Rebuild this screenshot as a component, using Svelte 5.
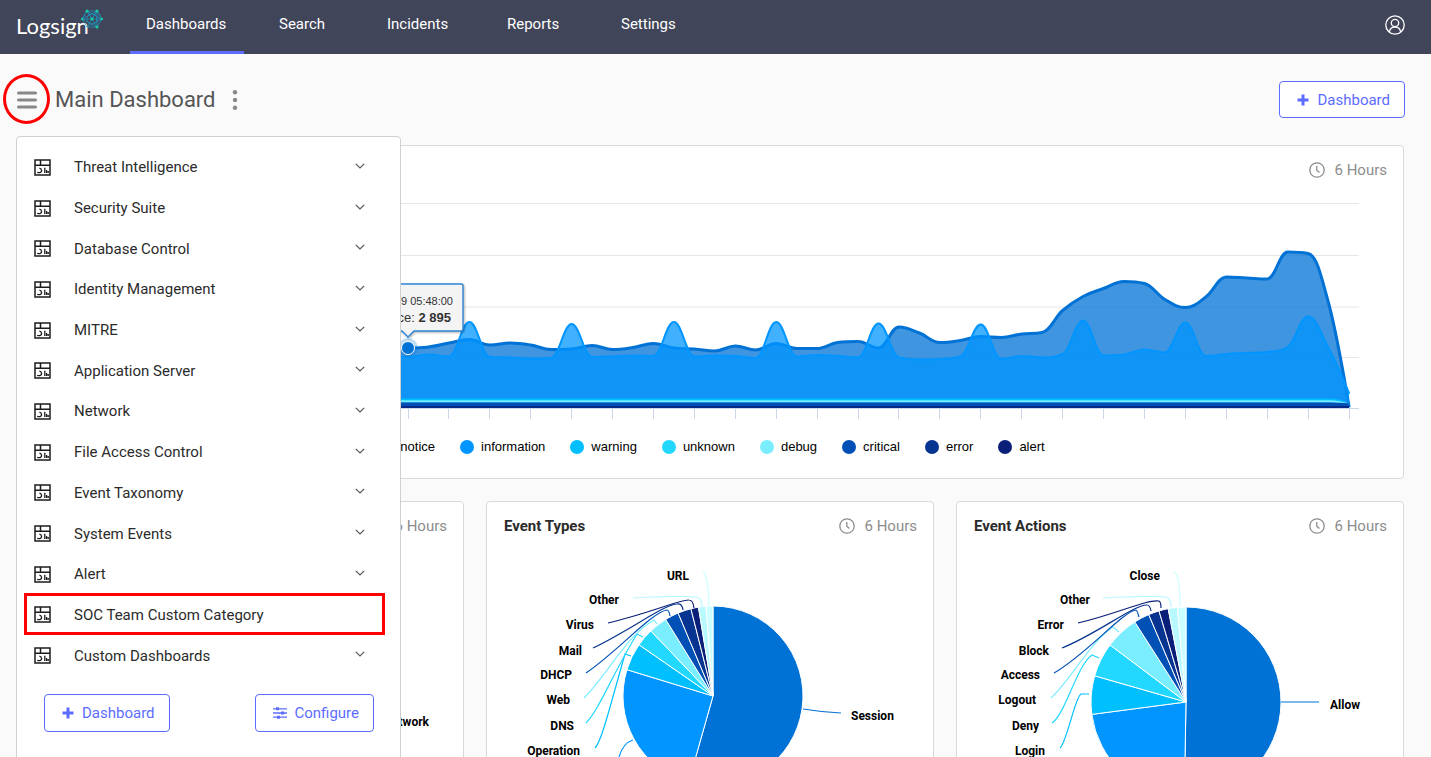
<script>
  const tabs = ['Dashboards', 'Search', 'Incidents', 'Reports', 'Settings'];

  const categories = [
    'Threat Intelligence', 'Security Suite', 'Database Control', 'Identity Management',
    'MITRE', 'Application Server', 'Network', 'File Access Control', 'Event Taxonomy',
    'System Events', 'Alert', 'SOC Team Custom Category', 'Custom Dashboards'
  ];
  const highlighted = 'SOC Team Custom Category';

  const legend = [
    ['notice', '#0072d6'], ['information', '#0095ff'], ['warning', '#00bfff'],
    ['unknown', '#22d8ff'], ['debug', '#7aedff'], ['critical', '#0050b5'],
    ['error', '#063490'], ['alert', '#0a1f78']
  ];

  // Timeline geometry
  const firstX = 391;
  const lastX = 1332;
  const base = 214;
  const noticeY = [
    154, 153, 149, 145.5, 151, 149, 151, 155.5, 155, 151.5, 155.5, 153.5, 149.5, 154, 155,
    157, 152, 156, 149.5, 154.5, 154.5, 148.5, 147.5, 154, 133, 139, 148.5, 146.5, 142.5,
    143.5, 140, 138.5, 116.5, 102.5, 94.5, 87.5, 89.5, 105.5, 113.5, 103, 83, 84, 85, 58,
    59.5, 109, 212
  ];
  const infoY = [
    163, 160.5, 162.5, 128, 163, 163.5, 164.5, 164, 130, 163, 162.5, 161.5, 162, 128, 162.5,
    161.5, 162, 164, 128, 162.5, 161, 162, 163.5, 129.5, 163.5, 165.5, 165, 162.5, 130.5,
    165, 162, 163.5, 160, 126.5, 161.5, 160.5, 155.5, 158.5, 128.5, 162, 160, 159, 158, 153,
    122.5, 154, 199
  ];

  function toPoints(ys) {
    const step = (lastX - firstX) / (ys.length - 1);
    return [[70, ys[0]], ...ys.map((y, i) => [firstX + i * step, y])];
  }

  // Smoothed line that never overshoots its neighbours
  function spline(pts) {
    let d = `M${pts[0][0]} ${pts[0][1]}`;
    let out = pts[0];
    for (let i = 1; i < pts.length; i++) {
      const [x, y] = pts[i];
      const [px, py] = pts[i - 1];
      let left = [x, y];
      let right = [x, y];
      if (i < pts.length - 1) {
        const [nx, ny] = pts[i + 1];
        const lx = (1.5 * x + px) / 2.5;
        let ly = (1.5 * y + py) / 2.5;
        const rx = (1.5 * x + nx) / 2.5;
        let ry = (1.5 * y + ny) / 2.5;
        const c = ((ry - ly) * (rx - x)) / (rx - lx) + y - ry;
        ly += c;
        ry += c;
        if (ly > py && ly > y) { ly = Math.max(py, y); ry = 2 * y - ly; }
        else if (ly < py && ly < y) { ly = Math.min(py, y); ry = 2 * y - ly; }
        if (ry > ny && ry > y) { ry = Math.max(ny, y); ly = 2 * y - ry; }
        else if (ry < ny && ry < y) { ry = Math.min(ny, y); ly = 2 * y - ry; }
        left = [lx, ly];
        right = [rx, ry];
      }
      d += ` C${out[0]} ${out[1]} ${left[0]} ${left[1]} ${x} ${y}`;
      out = right;
    }
    return d;
  }

  const areas = [
    { line: spline(toPoints(noticeY)), color: '#0072d6', width: 3 },
    { line: spline(toPoints(infoY)), color: '#0095ff', width: 2 }
  ];
  const bands = [
    { y: 205.5, color: '#00bfff', width: 2 },
    { y: 206.5, color: '#22d8ff', width: 1 },
    { y: 207.5, color: '#7aedff', width: 2 },
    { y: 210, color: '#0050b5', width: 3 },
    { y: 211.5, color: '#0050b5', width: 3 },
    { y: 213, color: '#062a85', width: 2 }
  ];
  const ticks = Array.from({ length: 24 }, (_, i) => Math.floor(firstX + (i * (lastX - firstX)) / 23) + 0.5);

  // Pies
  const palette = ['#0072d6', '#0095ff', '#00bfff', '#22d8ff', '#7aedff', '#0050b5', '#063490', '#0a1f78', '#b8f8ff', '#ccffff'];

  function slices({ cx, cy, r, stops }) {
    return stops.map((end, i) => {
      const at = (deg) => {
        const t = (deg * Math.PI) / 180;
        return `${cx + r * Math.sin(t)} ${cy - r * Math.cos(t)}`;
      };
      const start = i ? stops[i - 1] : 0;
      return `M${cx} ${cy}L${at(start)}A${r} ${r} 0 ${end - start > 180 ? 1 : 0} 1 ${at(end)}Z`;
    });
  }

  const pies = [
    {
      title: '',
      labels: [['Network', 412, 176, 'end']],
      stops: [],
      links: []
    },
    {
      title: 'Event Types',
      cx: 226, cy: 146, r: 90,
      stops: [195.8, 287, 304.7, 316.3, 328.3, 337.2, 345.8, 350.7, 355.5, 360],
      labels: [
        ['URL', 202, 30, 'end'], ['Other', 132, 54, 'end'], ['Virus', 107, 79, 'end'],
        ['Mail', 95, 105, 'end'], ['DHCP', 85, 129, 'end'], ['Web', 83, 154, 'end'],
        ['DNS', 87, 180, 'end'], ['Operation', 93, 205, 'end'], ['Session', 364, 170, 'start']
      ],
      links: [
        ['M316 159Q334 162 354 163', 0], ['M132 207Q136 193 146 190', 1],
        ['M108 198C115 190 122 160 138 104L144 106', 2], ['M99 173C112 160 125 125 150 84L156 87', 3],
        ['M97 148C120 125 140 85 167 70L170 74', 4], ['M99 123C130 102 165 62 180 60Q182 60 183 66', 5],
        ['M106 98C140 82 178 54 190 54Q195 53 196 60', 6], ['M121 73C160 64 195 49 202 50Q206 50 207 58', 7],
        ['M146 48C180 46 208 46 212 48Q215 50 215 57', 8], ['M216 22C221 24 221 43 222 56', 9]
      ]
    },
    {
      title: 'Event Actions',
      cx: 229, cy: 152, r: 95,
      stops: [181, 262.5, 286, 306.9, 327.4, 336.9, 343.5, 349.2, 354.8, 360],
      labels: [
        ['Close', 203, 30, 'end'], ['Other', 133, 54, 'end'], ['Error', 107, 79, 'end'],
        ['Block', 92, 105, 'end'], ['Access', 83, 129, 'end'], ['Logout', 79, 154, 'end'],
        ['Deny', 82, 180, 'end'], ['Login', 88, 205, 'end'], ['Allow', 373, 159, 'start']
      ],
      links: [
        ['M324 152H362', 0], ['M103 198C110 192 118 147 124 144L132 144', 2],
        ['M95 173C108 165 120 115 135 105L142 108', 3], ['M94 148C112 132 135 90 156 77L162 82', 4],
        ['M97 123C130 104 165 62 179 60Q180 60 182 67', 5], ['M105 98C140 84 178 54 190 55Q193 55 194 61', 6],
        ['M121 73C160 64 190 49 202 51Q204 52 204 58', 7], ['M146 48C180 46 208 46 211 48Q214 50 214 57', 8],
        ['M217 22C222 24 223 43 223 56', 9]
      ]
    }
  ];
</script>

{#snippet plus()}
  <svg class="plus" viewBox="0 0 12 12" aria-hidden="true"><path d="M6 0.5V11.5M0.5 6H11.5" /></svg>
{/snippet}

{#snippet period()}
  <span class="period">
    <svg viewBox="0 0 16 16" aria-hidden="true">
      <circle cx="8" cy="8" r="7.2" />
      <path d="M7.8 4V8.3L10.4 10.6" />
    </svg>
    6 Hours
  </span>
{/snippet}

<div class="app">
  <header>
    <a class="logo" href="#home">
      <span>Logsign</span>
      <svg viewBox="0 0 22 20" aria-hidden="true">
        <g class="web">
          <path d="M6 2H16L21 10L16 18H6L1 10Z" />
          <path d="M6 2L11 10L16 2L21 10H1L6 2L16 18L16 2L6 18M1 10L16 2M1 10L16 18M21 10L6 2M21 10L6 18" />
          <circle cx="11" cy="10" r="5" />
        </g>
        <g class="nodes">
          <circle cx="6" cy="2" r="1.5" /><circle cx="16" cy="2" r="1.5" />
          <circle cx="20.7" cy="10" r="1.3" /><circle cx="16" cy="18" r="1.5" />
          <circle cx="1.2" cy="10" r="1.2" /><circle cx="11" cy="10" r="1.6" />
        </g>
      </svg>
    </a>
    <nav>
      {#each tabs as tab, i}
        <a href="#{tab.toLowerCase()}" class:active={i === 0}>{tab}</a>
      {/each}
    </nav>
    <button class="user" aria-label="Account">
      <svg viewBox="0 0 20 20" aria-hidden="true">
        <circle cx="10" cy="10" r="9.2" />
        <circle cx="10" cy="8" r="3.7" />
        <path d="M4.4 17Q5 12.2 10 12.2T15.6 17" />
      </svg>
    </button>
  </header>

  <div class="toolbar">
    <button class="burger" aria-label="Dashboard menu">
      <svg viewBox="0 0 22 18" aria-hidden="true"><path d="M2.5 2H19.5M2.5 9H19.5M2.5 16H19.5" /></svg>
      <span class="ring"></span>
    </button>
    <h1>Main Dashboard</h1>
    <button class="kebab" aria-label="More options">
      <svg viewBox="0 0 6 20" aria-hidden="true">
        <circle cx="3" cy="2.2" r="2.2" /><circle cx="3" cy="10" r="2.2" /><circle cx="3" cy="17.8" r="2.2" />
      </svg>
    </button>
    <button class="outline add">{@render plus()}Dashboard</button>
  </div>

  <main>
    <section class="card wide">
      <div class="head">{@render period()}</div>
      <svg class="timeline" viewBox="0 0 1386 236" role="img" aria-label="Events by severity">
        <g class="grid">
          {#each [9.5, 61.5, 113, 163.5] as y}<path d="M60 {y}H1342" />{/each}
        </g>
        <path class="axis" d="M60 214.5H1342" />
        {#each ticks as x}<path class="axis" d="M{x} 215V225" />{/each}
        {#each areas as a}
          <path d="{a.line}V{base}H70Z" fill={a.color} fill-opacity="0.75" />
          <path d={a.line} fill="none" stroke={a.color} stroke-width={a.width} stroke-linecap="round" />
        {/each}
        {#each bands as b}
          <path d="M70 {b.y}H1312Q1324 {b.y} 1332 {Math.max(b.y, 211)}" fill="none" stroke={b.color} stroke-width={b.width} />
        {/each}
        <circle class="halo" cx="391" cy="154" r="10" />
        <circle class="marker" cx="391" cy="154" r="6.5" />
        <g class="tip">
          <path d="M340 90H444Q446 90 446 92V135Q446 137 444 137H397L391 143L385 137H340Z" />
          <text class="small" x="436" y="111" text-anchor="end">9 05:48:00</text>
          <text x="434" y="128" text-anchor="end">notice: <tspan class="strong">2 895</tspan></text>
        </g>
      </svg>
      <ul class="legend">
        {#each legend as [name, color]}
          <li><i style="background: {color}"></i>{name}</li>
        {/each}
      </ul>
    </section>

    {#each pies as pie}
      <section class="card">
        <div class="head">
          {#if pie.title}<h2>{pie.title}</h2>{/if}
          {@render period()}
        </div>
        <svg class="pie" viewBox="0 0 446 300" aria-hidden="true">
          {#each slices(pie) as d, i}
            <path class="slice" {d} fill={palette[i]} />
          {/each}
          {#each pie.links as [d, i]}
            <path {d} fill="none" stroke={palette[i]} stroke-width="1.2" />
          {/each}
          {#each pie.labels as [text, x, y, anchor]}
            <text {x} {y} text-anchor={anchor}>{text}</text>
          {/each}
        </svg>
      </section>
    {/each}
  </main>

  <aside>
    <ul>
      {#each categories as name}
        <li class:marked={name === highlighted}>
          <button>
            <svg class="board" viewBox="0 0 17 17" aria-hidden="true">
              <path d="M1 1H16V16H1ZM1 6.2H16M6.5 1V6" />
              <path class="thin" d="M3.2 13.4Q7.6 14.2 7.6 11.6Q7.5 9.6 5.4 9.2M10.8 14V8.8M12.6 14V11M14.2 14V12" />
            </svg>
            <span>{name}</span>
            {#if name !== highlighted}
              <svg class="chevron" viewBox="0 0 10 6" aria-hidden="true"><path d="M0.8 0.8L5 5L9.2 0.8" /></svg>
            {/if}
          </button>
        </li>
      {/each}
    </ul>
    <div class="actions">
      <button class="outline">{@render plus()}Dashboard</button>
      <button class="outline tight">
        <svg class="sliders" viewBox="0 0 14 12" aria-hidden="true">
          <path d="M0 1.8H14M0 6H14M0 10.2H14" />
          <path class="knob" d="M4.5 0.3V3.3M9.5 4.5V7.5M5.5 8.7V11.7" />
        </svg>
        Configure
      </button>
    </div>
  </aside>
</div>

<style>
  :global(body) {
    background: #fafafa;
  }
  .app {
    position: relative;
    height: 100vh;
    overflow: hidden;
    font: 15px/20px Roboto, sans-serif;
    color: #333;
  }
  button {
    font: inherit;
    color: inherit;
    background: none;
    border: 0;
    padding: 0;
    cursor: pointer;
  }
  svg {
    display: block;
    flex: none;
  }
  ul {
    list-style: none;
    margin: 0;
    padding: 0;
  }

  header {
    display: flex;
    align-items: flex-start;
    height: 54px;
    padding: 0 26px 0 16px;
    box-sizing: border-box;
    background: #414559;
    color: #fff;
  }
  .logo {
    display: flex;
    width: 114px;
    color: #fff;
    text-decoration: none;
  }
  .logo span {
    font: 22px/24px Lato, sans-serif;
    margin-top: 14px;
  }
  .logo svg {
    width: 22px;
    height: 20px;
    margin: 9px 0 0 -8px;
  }
  .web {
    fill: none;
    stroke: #1c9ac4;
    stroke-width: 0.7;
  }
  .nodes {
    fill: #14cfa6;
  }
  nav {
    display: grid;
    grid-template-columns: 133px 108px 120px 114px auto;
    justify-items: start;
  }
  nav a {
    height: 54px;
    box-sizing: border-box;
    padding: 14px 16px 0;
    color: #fff;
    text-decoration: none;
  }
  nav a.active {
    padding-right: 18px;
    border-bottom: 3px solid #5c6cff;
  }
  .user {
    margin: 15px 0 0 auto;
  }
  .user svg {
    width: 20px;
    height: 20px;
    fill: none;
    stroke: #fff;
    stroke-width: 1.3;
  }

  .toolbar {
    display: flex;
    align-items: center;
    height: 91px;
    padding: 0 26px 0 16px;
    box-sizing: border-box;
  }
  .burger {
    position: relative;
  }
  .burger svg {
    width: 22px;
    height: 18px;
    fill: none;
    stroke: #888;
    stroke-width: 3;
    stroke-linecap: round;
  }
  .ring {
    position: absolute;
    inset: -17px -12px -15px -13px;
    border: 3px solid #f00;
    border-radius: 50%;
  }
  h1 {
    margin: 0 16px 0 17px;
    font-size: 22px;
    line-height: 28px;
    font-weight: 400;
    color: #555;
  }
  .kebab svg {
    width: 6px;
    height: 20px;
    fill: #888;
  }
  .outline {
    display: flex;
    align-items: center;
    gap: 8px;
    height: 38px;
    padding: 0 14px 0 17px;
    border: 1px solid #5c6cff;
    border-radius: 4px;
    background: #fff;
    color: #5c6cff;
  }
  .tight {
    gap: 7px;
  }
  .add {
    height: 37px;
    margin-left: auto;
  }
  .plus {
    width: 12px;
    height: 12px;
    fill: none;
    stroke: #5c6cff;
    stroke-width: 3;
  }
  .sliders {
    width: 14px;
    height: 12px;
    fill: none;
    stroke: #5c6cff;
    stroke-width: 1.3;
  }
  .knob {
    stroke-width: 3;
  }

  main {
    display: grid;
    grid-template-columns: repeat(3, 1fr);
    gap: 22px;
    padding: 0 27px 24px 16px;
  }
  .card {
    min-width: 0;
    border: 1px solid #d9d9d9;
    border-radius: 4px;
    background: #fff;
  }
  .wide {
    grid-column: 1 / -1;
  }
  .head {
    display: flex;
    align-items: center;
    height: 48px;
    padding: 0 16px 0 17px;
  }
  h2 {
    margin: 0;
    font-size: 15px;
    line-height: 20px;
    font-weight: 700;
    color: #2b2b2b;
  }
  .period {
    display: flex;
    align-items: center;
    gap: 10px;
    margin-left: auto;
    color: #8c8c8c;
  }
  .period svg {
    width: 16px;
    height: 16px;
    fill: none;
    stroke: #8c8c8c;
    stroke-width: 1.3;
  }

  .timeline,
  .pie {
    width: 100%;
    height: auto;
  }
  .grid path {
    stroke: #e6e6e6;
  }
  .axis {
    stroke: #ccd6eb;
  }
  .halo {
    fill: #0072d6;
    fill-opacity: 0.25;
  }
  .marker {
    fill: #0072d6;
    stroke: #fff;
  }
  .tip path {
    fill: #f7f7f7;
    fill-opacity: 0.95;
    stroke: #2f86d8;
    stroke-width: 1.4;
    filter: drop-shadow(1px 1px 1px rgba(0, 0, 0, 0.3));
  }
  .tip text {
    font: 13px "Liberation Sans", sans-serif;
    fill: #333;
  }
  .tip .small {
    font-size: 11px;
  }
  .tip .strong {
    font-weight: 700;
  }
  .legend {
    display: flex;
    justify-content: center;
    align-items: center;
    gap: 25px;
    height: 34px;
    margin-bottom: 14px;
    padding-left: 4px;
    font: 13px/16px "Liberation Sans", sans-serif;
    color: #000;
  }
  .legend li {
    display: flex;
    align-items: center;
    gap: 7px;
  }
  .legend i {
    width: 14px;
    height: 14px;
    border-radius: 50%;
  }
  .slice {
    stroke: #fff;
  }
  .pie text {
    font: 700 12px Roboto, sans-serif;
    fill: #000;
  }

  aside {
    position: absolute;
    top: 136px;
    bottom: -8px;
    left: 16px;
    width: 383px;
    border: 1px solid #d0d0d0;
    border-radius: 4px;
    background: #fff;
  }
  aside ul {
    display: flex;
    flex-direction: column;
    height: 529px;
    margin: 10px 15px 0 7px;
  }
  aside li {
    position: relative;
    flex: 1;
    display: flex;
  }
  aside li button {
    display: flex;
    align-items: center;
    width: 100%;
    padding: 0 20px 0 10px;
    text-align: left;
    color: #2b2b2b;
  }
  aside li span {
    flex: 1;
    margin-left: 23px;
  }
  .marked::after {
    content: '';
    position: absolute;
    inset: -2px 0 0;
    border: 3px solid #f00;
    pointer-events: none;
  }
  .board {
    width: 17px;
    height: 17px;
    fill: none;
    stroke: #1c1c1c;
    stroke-width: 1.5;
  }
  .board .thin {
    stroke-width: 1.3;
  }
  .chevron {
    width: 10px;
    height: 6px;
    margin-bottom: 3px;
    fill: none;
    stroke: #555;
    stroke-width: 1.2;
  }
  .actions {
    display: flex;
    justify-content: space-between;
    padding: 18px 26px 0 27px;
  }
</style>
